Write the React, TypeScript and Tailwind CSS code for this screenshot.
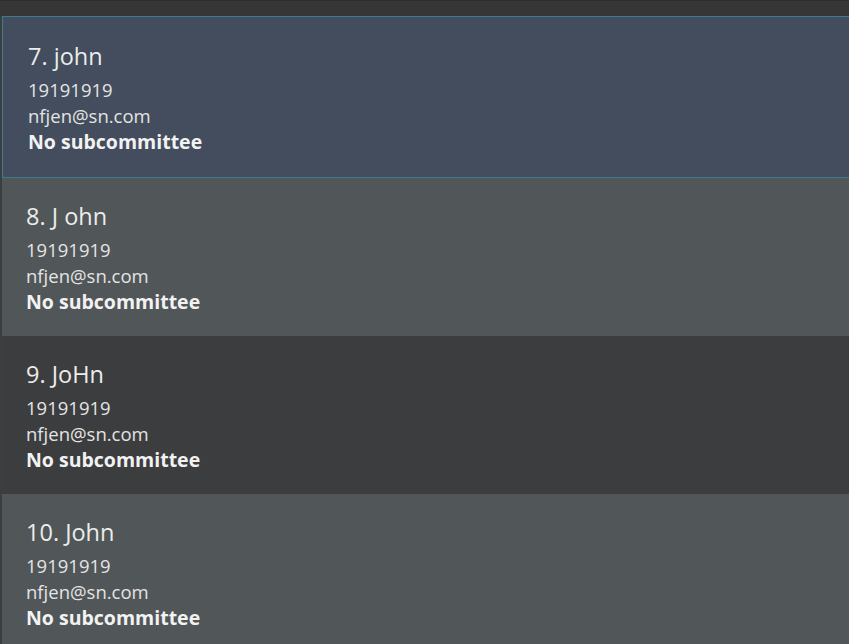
import React from "react";

type P = { idx: number; name: string; bg: string; selected?: boolean };

const people: P[] = [
  { idx: 7, name: "john", bg: "bg-[#434d5e]", selected: true },
  { idx: 8, name: "J ohn", bg: "bg-[#515658]" },
  { idx: 9, name: "JoHn", bg: "bg-[#3c3d3f]" },
  { idx: 10, name: "John", bg: "bg-[#515658]" },
];

function Card({ p }: { p: P }) {
  return (
    <div
      className={
        p.selected
          ? `${p.bg} border border-r-0 border-[#3c7c8f] pl-[25px] pt-[24px] pb-[23px] shrink-0`
          : `${p.bg} pl-[24px] pt-[23px] pb-[22px] shrink-0`
      }
    >
      <div className="text-[23.5px] leading-[30px] text-[#ececec] mb-[6px]">
        {p.idx}. {p.name}
      </div>
      <div className="text-[18.5px] leading-[26px] text-[#e4e4e4]">19191919</div>
      <div className="text-[18.5px] leading-[26px] text-[#e4e4e4]">nfjen@sn.com</div>
      <div className="text-[19.5px] leading-[25px] font-bold text-[#f2f2f2]">No subcommittee</div>
    </div>
  );
}

export default function App() {
  return (
    <div
      className="w-[849px] h-[644px] overflow-hidden bg-[#3c3f41] flex flex-col"
      style={{ fontFamily: '"Open Sans", "Noto Sans", sans-serif' }}
    >
      <div className="h-[16px] shrink-0 bg-[#363636] border-t border-[#2c2c2c]" />
      <div className="flex flex-col pl-[2px]">
        {people.map((p) => (
          <Card key={p.idx} p={p} />
        ))}
      </div>
    </div>
  );
}
